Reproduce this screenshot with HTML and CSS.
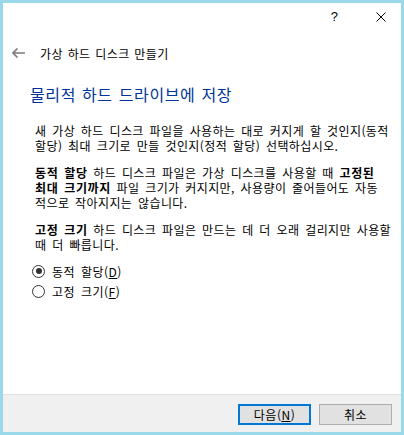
FILE: index.html
```html
<!DOCTYPE html>
<html lang="ko">
<head>
  <meta charset="UTF-8">
  <meta name="viewport" content="width=device-width, initial-scale=1.0">
  <title>가상 하드 디스크 만들기</title>
  <link rel="stylesheet" href="styles.css">
</head>
<body>
  <div class="window">
    <div class="titlebar">
      <span class="help">?</span>
      <svg class="close" width="10" height="10" viewBox="0 0 10 10">
        <path d="M0.5 0.5 L9.5 9.5 M9.5 0.5 L0.5 9.5" stroke="#000" stroke-width="1" fill="none"/>
      </svg>
    </div>

    <div class="nav">
      <svg class="back" width="13" height="10" viewBox="0 0 13 10">
        <path d="M1 5 H13 M5.5 0.5 L1 5 L5.5 9.5" stroke="#7a7a7a" stroke-width="1.6" fill="none"/>
      </svg>
      <span class="nav-title">가상 하드 디스크 만들기</span>
    </div>

    <div class="content">
      <h1>물리적 하드 드라이브에 저장</h1>
      <p>새 가상 하드 디스크 파일을 사용하는 대로 커지게 할 것인지(동적<br>할당) 최대 크기로 만들 것인지(정적 할당) 선택하십시오.</p>
      <p><b>동적 할당</b> 하드 디스크 파일은 가상 디스크를 사용할 때 <b>고정된<br>최대 크기까지</b> 파일 크기가 커지지만, 사용량이 줄어들어도 자동<br>적으로 작아지지는 않습니다.</p>
      <p><b>고정 크기</b> 하드 디스크 파일은 만드는 데 더 오래 걸리지만 사용할<br>때 더 빠릅니다.</p>

      <div class="options">
        <label class="radio checked"><span class="dot"></span>동적 할당(<u>D</u>)</label>
        <label class="radio"><span class="dot"></span>고정 크기(<u>F</u>)</label>
      </div>
    </div>

    <div class="footer">
      <button class="btn default">다음(<u>N</u>)</button>
      <button class="btn">취소</button>
    </div>
  </div>
</body>
</html>
```

FILE: styles.css
```css
html, body {
  margin: 0;
  padding: 0;
}

body {
  font-family: "Noto Sans CJK KR", "Noto Sans", sans-serif;
  font-size: 12px;
  color: #000;
  background: #fff;
}

.window {
  box-sizing: border-box;
  width: 404px;
  height: 435px;
  border: 3px solid #99d9ea;
  display: flex;
  flex-direction: column;
  background: #fff;
}

.titlebar {
  height: 28px;
  display: flex;
  align-items: center;
  justify-content: flex-end;
  padding-right: 15px;
}

.help {
  font-family: "Liberation Sans", sans-serif;
  font-size: 13px;
  margin-right: 38px;
  margin-top: -1px;
}

.close {
  display: block;
}

.nav {
  height: 44px;
  display: flex;
  align-items: center;
  padding-left: 9px;
}

.back {
  display: block;
  margin-right: 15px;
}

.nav-title {
  letter-spacing: 0.4px;
  word-spacing: 1px;
}

.content {
  flex: 1;
  padding: 8px 6px 0 27px;
}

h1 {
  margin: 0 0 18px;
  font-size: 16px;
  font-weight: normal;
  color: #003399;
  line-height: 22px;
  letter-spacing: 0.6px;
  word-spacing: 1px;
}

p {
  margin: 0 0 12px 5px;
  line-height: 15px;
  letter-spacing: 0.4px;
  word-spacing: 2px;
}

p:last-of-type {
  margin-bottom: 9px;
}

p b {
  letter-spacing: 0.6px;
}

.options {
  margin-left: 2px;
}

.radio {
  display: flex;
  align-items: center;
  height: 20px;
  letter-spacing: 0.5px;
  word-spacing: 2px;
}

.dot {
  box-sizing: border-box;
  width: 13px;
  height: 13px;
  border: 1px solid #333;
  border-radius: 50%;
  margin-right: 7px;
  position: relative;
}

.checked .dot::after {
  content: "";
  position: absolute;
  left: 2.5px;
  top: 2.5px;
  width: 6px;
  height: 6px;
  border-radius: 50%;
  background: #333;
}

.footer {
  height: 38px;
  border-top: 1px solid #dfdfdf;
  background: #f0f0f0;
  display: flex;
  justify-content: flex-end;
  gap: 8px;
  padding: 9px 9px 0 0;
  box-sizing: border-box;
  align-items: flex-start;
}

.btn {
  box-sizing: border-box;
  width: 73px;
  height: 21px;
  padding: 0;
  border: 1px solid #adadad;
  background: #e1e1e1;
  font-family: inherit;
  font-size: 12px;
  color: #000;
  letter-spacing: 0.5px;
  line-height: 17px;
}

.btn.default {
  border: 2px solid #0078d7;
}
```
